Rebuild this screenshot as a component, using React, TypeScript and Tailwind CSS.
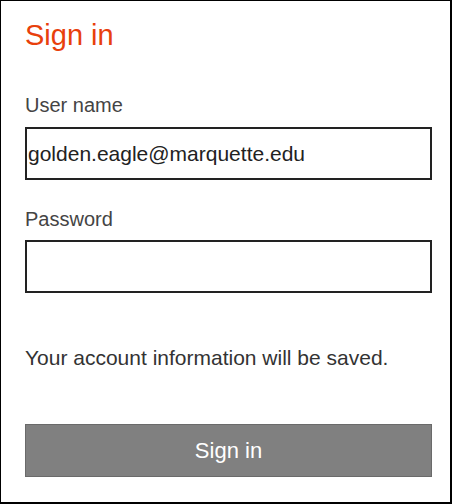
export default function App() {
  return (
    <div
      className="w-[452px] h-[504px] bg-white border-t border-l border-r-2 border-b-2 border-black pl-[24px] pr-[18px] flex flex-col"
      style={{ fontFamily: '"Liberation Sans", Arial, sans-serif' }}
    >
      <h1 className="mt-[18px] text-[29px] leading-[32px] text-[#e8400c]">Sign in</h1>

      <label className="mt-[42px] text-[20px] leading-[24px] text-[#444]">User name</label>
      <div className="mt-[10px] h-[53px] border-2 border-[#222] flex items-center pl-[1px]">
        <span className="text-[21px] leading-[24px] text-[#222]">golden.eagle@marquette.edu</span>
      </div>

      <label className="mt-[27px] text-[20px] leading-[24px] text-[#444]">Password</label>
      <div className="mt-[9px] h-[53px] border-2 border-[#222]" />

      <p className="mt-[53px] text-[21px] leading-[24px] text-[#333]">
        Your account information will be saved.
      </p>

      <button className="mt-[54px] h-[53px] w-full bg-[#808080] border border-[#6a6a6a] text-white text-[22px] leading-[24px]">
        Sign in
      </button>
    </div>
  );
}
